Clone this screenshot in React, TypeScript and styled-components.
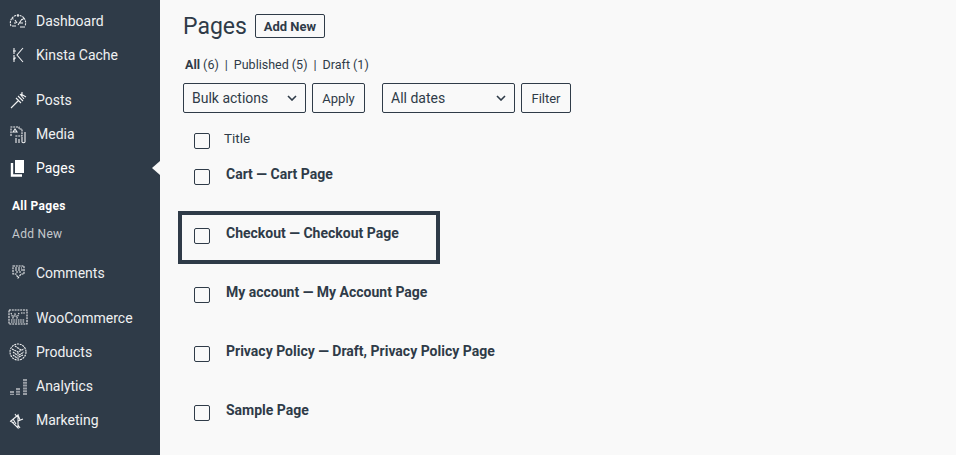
import React from 'react';
import styled, { createGlobalStyle } from 'styled-components';

const GlobalStyle = createGlobalStyle`
  html, body {
    margin: 0;
    padding: 0;
    height: 100%;
    overflow: hidden;
    background: #f9f9f9;
    font-family: Roboto, "Liberation Sans", sans-serif;
    color: #2f3b48;
  }
`;

const Page = styled.div`
  display: flex;
  width: 956px;
  height: 455px;
`;

const Sidebar = styled.nav`
  display: flex;
  flex-direction: column;
  flex: 0 0 160px;
  padding-top: 4px;
  box-sizing: border-box;
  background: #2f3b48;
  color: #f4f5f6;
`;

const MenuItem = styled.div<{ $gap?: number; $current?: boolean }>`
  position: relative;
  display: flex;
  align-items: center;
  flex: 0 0 34px;
  margin-top: ${({ $gap }) => $gap ?? 0}px;
  padding-left: 8px;
  font-size: 14px;
  color: ${({ $current }) => ($current ? '#ffffff' : '#f0f1f2')};
`;

const MenuIcon = styled.svg`
  flex: 0 0 20px;
  width: 20px;
  height: 20px;
  margin-right: 8px;
  fill: none;
  stroke: currentColor;
  stroke-width: 1.1;
`;

const SubItem = styled.div<{ $active?: boolean; $gap?: number }>`
  display: flex;
  align-items: center;
  flex: 0 0 28px;
  margin-top: ${({ $gap }) => $gap ?? 0}px;
  padding-left: 12px;
  font-size: 12px;
  letter-spacing: 0.3px;
  font-weight: ${({ $active }) => ($active ? 700 : 400)};
  color: ${({ $active }) => ($active ? '#ffffff' : '#c5c9cd')};
`;

const CurrentArrow = styled.span`
  position: absolute;
  right: 0;
  top: 10px;
  width: 0;
  height: 0;
  border: 7px solid transparent;
  border-left: 0;
  border-right: 8px solid #f9f9f9;
`;

const Main = styled.main`
  display: flex;
  flex-direction: column;
  flex: 1;
  padding: 14px 0 0 23px;
`;

const Header = styled.div`
  display: flex;
  align-items: center;
  gap: 8px;
  height: 24px;
`;

const Title = styled.h1`
  margin: 0;
  font-size: 23px;
  font-weight: 400;
`;

const Button = styled.button<{ $strong?: boolean; $width: number }>`
  box-sizing: border-box;
  width: ${({ $width }) => $width}px;
  height: ${({ $strong }) => ($strong ? 24 : 30)}px;
  padding: 0;
  border: 1px solid #2f3b48;
  border-radius: 2px;
  background: transparent;
  color: #2f3b48;
  font-family: inherit;
  font-size: 13px;
  font-weight: ${({ $strong }) => ($strong ? 700 : 400)};
`;

const Filters = styled.div`
  display: flex;
  margin-top: 19px;
  padding-left: 2px;
  font-size: 12.5px;
  line-height: 16px;
`;

const Strong = styled.b`
  font-weight: 700;
`;

const Separator = styled.span`
  margin: 0 6px;
`;

const Toolbar = styled.div`
  display: flex;
  align-items: center;
  gap: 6px;
  margin-top: 10px;
`;

const SelectBox = styled.div<{ $width: number; $after?: number }>`
  display: flex;
  align-items: center;
  justify-content: space-between;
  box-sizing: border-box;
  width: ${({ $width }) => $width}px;
  height: 30px;
  margin-left: ${({ $after }) => $after ?? 0}px;
  padding: 0 8px;
  border: 1px solid #2f3b48;
  border-radius: 2px;
  font-size: 14px;
`;

const Chevron = styled.svg`
  width: 10px;
  height: 6px;
  fill: none;
  stroke: #2f3b48;
  stroke-width: 1.6;
`;

const HeadRow = styled.div`
  display: flex;
  align-items: flex-start;
  margin-top: 16px;
  padding-left: 11px;
  height: 23px;
  font-size: 13.5px;
`;

const Check = styled.span`
  flex: 0 0 16px;
  box-sizing: border-box;
  width: 16px;
  height: 16px;
  margin-top: 4px;
  border: 1px solid #2f3b48;
  border-radius: 2px;
`;

const HeadLabel = styled.span`
  margin: 1px 0 0 14px;
  line-height: 16px;
`;

const Row = styled.div<{ $focused?: boolean }>`
  display: flex;
  align-items: flex-start;
  box-sizing: border-box;
  width: 262px;
  height: 53px;
  margin: 0 0 6px -5px;
  padding: 9px 0 0 12px;
  border: 4px solid ${({ $focused }) => ($focused ? '#2f3b48' : 'transparent')};
  white-space: nowrap;
`;

const RowTitle = styled.span`
  margin-left: 16px;
  font-size: 14px;
  font-weight: 700;
  line-height: 18px;
`;

const menuPaths: Record<string, React.ReactNode> = {
  dashboard: (
    <>
      <path d="M3 15a8 8 0 0 1 1-8l2 2M4 7a8 8 0 0 1 12 0l-2 2M16 7a8 8 0 0 1 1 8" strokeDasharray="2 .8" />
      <path d="M10 3v3M10 14l4-6M6 12h2M12 12h3M4 15h4M12 16h5M7 9l2 3" />
    </>
  ),
  kinsta: <path d="M6 3v3M8 6H6v3M6 10v3h2M6 13v4M15 3l-6 7 6 7M5 6h2M5 14h2" />,
  posts: <path d="M3 18l8-8M8 8l5 5M10 6l5 5M12 4l4 5M14 2v4M13 4l5 3" />,
  media: (
    <>
      <path d="M3 12V3h8v2h3v7H7" strokeDasharray="2 .8" />
      <path d="M5 8l2-3 2 3zM8 14v5M11 15v4M14 13v5a2 2 0 0 0 3 0V8" />
    </>
  ),
  comments: (
    <>
      <path d="M5 3h11v8h-3l-3 4-2-4H5z" strokeDasharray="2 .8" />
      <path d="M7 5h7M7 7h8M8 9h6" strokeDasharray="2 1" />
    </>
  ),
  woo: (
    <>
      <path d="M1 2h18v14H1z" strokeDasharray="2 .8" />
      <path d="M3 5l2 5 2-4 2 4 2-5M13 5h4M3 12h14M3 14h14" strokeDasharray="1.5 .8" />
    </>
  ),
  products: (
    <>
      <circle cx="10" cy="10" r="8" strokeDasharray="2 .8" />
      <path d="M4 7l6 3 6-3M10 10v7M7 4l6 4M5 10l4 3M5 13l4 3M11 13l5-3M11 15l4-2" strokeDasharray="2 .6" />
    </>
  ),
  analytics: <path d="M3 15v4M5 15v4M9 12v7M11 12v7M16 3v16M18 3v16" strokeDasharray="2 .8" />,
  marketing: <path d="M3 11l7-6v13zM5 9l3 5M10 5l2 5M10 11l5-2M7 4l2 3M10 15l2 3M2 11l4 2" />,
};

function Icon({ name }: { name: string }): JSX.Element {
  return <MenuIcon viewBox="0 0 20 20">{menuPaths[name]}</MenuIcon>;
}

function PagesIcon(): JSX.Element {
  return (
    <MenuIcon viewBox="0 0 20 20">
      <path d="M7 2h9v13H7z" fill="currentColor" stroke="none" />
      <path d="M4 5v12.5h10" strokeWidth="2.4" />
    </MenuIcon>
  );
}

function CaretDown(): JSX.Element {
  return (
    <Chevron viewBox="0 0 10 6">
      <path d="M1 1l4 4 4-4" />
    </Chevron>
  );
}

const pages = [
  { title: 'Cart — Cart Page' },
  { title: 'Checkout — Checkout Page', focused: true },
  { title: 'My account — My Account Page' },
  { title: 'Privacy Policy — Draft, Privacy Policy Page' },
  { title: 'Sample Page' },
];

export default function App(): JSX.Element {
  return (
    <Page>
      <GlobalStyle />
      <Sidebar>
        <MenuItem><Icon name="dashboard" />Dashboard</MenuItem>
        <MenuItem><Icon name="kinsta" />Kinsta Cache</MenuItem>
        <MenuItem $gap={11}><Icon name="posts" />Posts</MenuItem>
        <MenuItem><Icon name="media" />Media</MenuItem>
        <MenuItem $current><PagesIcon />Pages<CurrentArrow /></MenuItem>
        <SubItem $active $gap={7}>All Pages</SubItem>
        <SubItem>Add New</SubItem>
        <MenuItem $gap={8}><Icon name="comments" />Comments</MenuItem>
        <MenuItem $gap={11}><Icon name="woo" />WooCommerce</MenuItem>
        <MenuItem><Icon name="products" />Products</MenuItem>
        <MenuItem><Icon name="analytics" />Analytics</MenuItem>
        <MenuItem><Icon name="marketing" />Marketing</MenuItem>
      </Sidebar>
      <Main>
        <Header>
          <Title>Pages</Title>
          <Button $strong $width={70}>Add New</Button>
        </Header>
        <Filters>
          <span><Strong>All</Strong> (6)</span>
          <Separator>|</Separator>
          <span>Published (5)</span>
          <Separator>|</Separator>
          <span>Draft (1)</span>
        </Filters>
        <Toolbar>
          <SelectBox $width={123}>Bulk actions<CaretDown /></SelectBox>
          <Button $width={53}>Apply</Button>
          <SelectBox $width={133} $after={11}>All dates<CaretDown /></SelectBox>
          <Button $width={50}>Filter</Button>
        </Toolbar>
        <HeadRow>
          <Check />
          <HeadLabel>Title</HeadLabel>
        </HeadRow>
        {pages.map((page) => (
          <Row key={page.title} $focused={page.focused}>
            <Check />
            <RowTitle>{page.title}</RowTitle>
          </Row>
        ))}
      </Main>
    </Page>
  );
}
